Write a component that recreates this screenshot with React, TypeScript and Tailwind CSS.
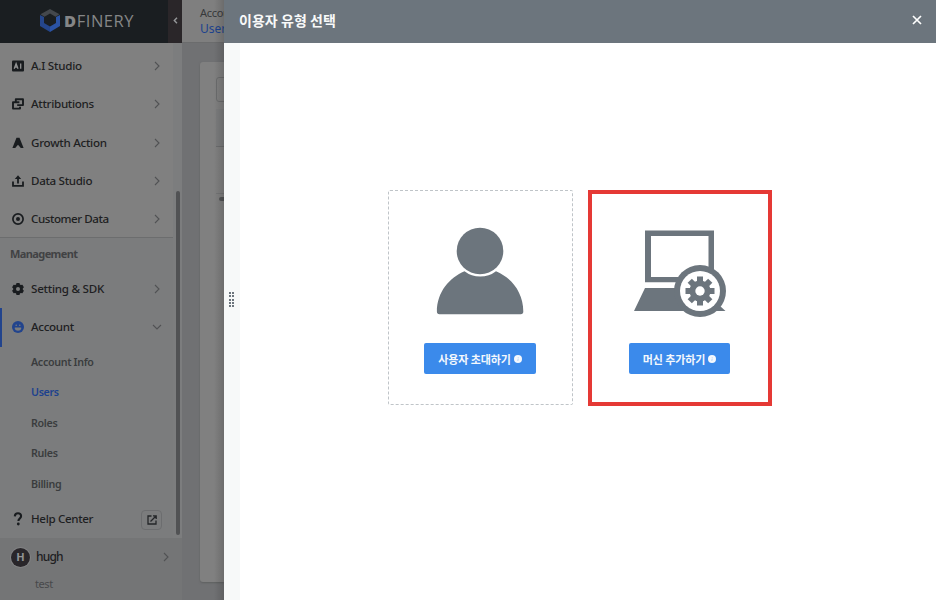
import React from "react";

const latin = "font-['Noto_Sans','Noto_Sans_CJK_KR',sans-serif]";
const korean = "font-['Noto_Sans_CJK_KR','Noto_Sans',sans-serif]";

function Chevron({ down = false }: { down?: boolean }) {
  return (
    <svg width="10" height="10" viewBox="0 0 10 10" fill="none" stroke="#515254" strokeWidth="1.1">
      <path d={down ? "M1 3l4 4 4-4" : "M3 1l4 4-4 4"} />
    </svg>
  );
}

const icons: Record<string, React.ReactNode> = {
  ai: (
    <>
      <rect x="0" y=".5" width="12" height="11" rx="1" fill="#191c1f" />
      <path d="M2.200 8.700l1.900-5L6 8.700M2.800 7h2.600M8.700 3.500v5.300" fill="none" stroke="#909192" strokeWidth="1.3" />
    </>
  ),
  attributions: (
    <g fill="none" stroke="#191c1f" strokeWidth="1.900" strokeLinejoin="round">
      <path d="M3.800 4V1.200h7.200v5.900H5.200" />
      <path d="M7.400 4.200H1v6.400h7V8.800" />
    </g>
  ),
  growth: <path d="M4.500 .8h3L11.600 11H8.800L6 7.800 3.200 11H.4z" fill="#191c1f" />,
  data: (
    <>
      <path d="M1 6.500v4.300h10V6.500" fill="none" stroke="#191c1f" strokeWidth="1.800" />
      <path d="M5.100 8.500V4H2.800L6 .2 9.200 4H6.900v4.500z" fill="#191c1f" />
    </>
  ),
  customer: (
    <>
      <circle cx="6" cy="6" r="5.100" fill="none" stroke="#191c1f" strokeWidth="1.700" />
      <circle cx="6" cy="6" r="2" fill="#191c1f" />
    </>
  ),
  setting: (
    <>
      <path
        d="M4.500 0h3l.4 1.600.9.5 1.600-.4 1.500 2.500L10.800 5.400v1.200l1.100 1.200-1.500 2.500-1.600-.4-.9.5L7.500 12h-3l-.4-1.600-.9-.5-1.600.4L.1 7.800l1.100-1.200V5.400L.1 4.200l1.500-2.500 1.600.4.9-.5z"
        fill="#191c1f"
      />
      <circle cx="6" cy="6" r="2" fill="#7b7c7d" />
    </>
  ),
  account: (
    <>
      <circle cx="6" cy="6" r="6" fill="#22448d" />
      <circle cx="4.200" cy="4.300" r=".8" fill="#7b7c7d" />
      <circle cx="7.800" cy="4.300" r=".8" fill="#7b7c7d" />
      <path d="M2.800 6.600h6.400v.6C9 9 7.500 9.700 6 9.700S3 9 2.800 7.200z" fill="#7b7c7d" />
    </>
  ),
};

function NavRow({ icon, label, spacing, down, active }: { icon: string; label: string; spacing: string; down?: boolean; active?: boolean }) {
  return (
    <div className={`flex h-[38.3px] shrink-0 items-center pr-[11px] ${active ? "border-l-2 border-[#22448d] pl-[10px]" : "pl-3"}`}>
      <svg width="12" height="12" viewBox="0 0 12 12">{icons[icon]}</svg>
      <span className={`ml-[7px] flex-1 text-[11.6px] leading-4 font-medium whitespace-nowrap text-[#1e2022] ${spacing}`}>{label}</span>
      <Chevron down={down} />
    </div>
  );
}

function Logo() {
  return (
    <div className="flex h-[43px] shrink-0 bg-[#1a1e21]">
      <div className="flex w-[168px] items-center pb-[2px] pl-10">
        <svg width="20" height="23" viewBox="0 0 20 23">
          <path d="M0 6l4 2v6l6 3.600V23L0 17z" fill="#25468b" />
          <path d="M20 6l-4 2v6l-6 3.600V23l10-6z" fill="#2b53a4" />
          <path d="M10 0l9.500 5.300-4 2.400L10 4.600 4.500 7.700l-4-2.400z" fill="#44484d" />
        </svg>
        <span className="ml-1 flex font-['Open_Sans',sans-serif] text-[16.5px] leading-5 tracking-[0.55px] text-[#858687]">
          <b className="font-extrabold">D</b><span>FINERY</span>
        </span>
      </div>
      <div className="flex w-[14px] items-center justify-center bg-[#2a2629] pb-[2px]">
        <svg width="5" height="7" viewBox="0 0 5 7" fill="none" stroke="#96989a" strokeWidth="1.400"><path d="M4 .7L1.300 3.500 4 6.300" /></svg>
      </div>
    </div>
  );
}

function Sidebar() {
  return (
    <aside className="flex h-full w-[182px] shrink-0 flex-col bg-[#7b7c7d]">
      <Logo />
      <div className="flex h-[495px] shrink-0">
        <div className="flex w-[173px] flex-col">
          <div className="h-[195px] border-b border-[#6c6d6e] bg-[#808080] pt-[4px]">
            <NavRow icon="ai" label="A.I Studio" spacing="tracking-[-0.25px]" />
            <NavRow icon="attributions" label="Attributions" spacing="tracking-[-0.3px]" />
            <NavRow icon="growth" label="Growth Action" spacing="tracking-[-0.27px]" />
            <NavRow icon="data" label="Data Studio" spacing="tracking-[-0.32px]" />
            <NavRow icon="customer" label="Customer Data" spacing="tracking-[-0.45px]" />
          </div>
          <div className="flex h-8 items-center pl-[10px] text-[11px] leading-4 font-bold tracking-[-0.6px] text-[#414244]">Management</div>
          <NavRow icon="setting" label="Setting & SDK" spacing="tracking-[-0.25px]" />
          <NavRow icon="account" label="Account" spacing="tracking-[-0.3px]" down active />
          <div className="-mt-px flex flex-col pl-[31px] text-[10.700px] font-semibold tracking-[-0.33px] text-[#3a3c3e]">
            <span className="h-[30.6px] leading-[32px]">Account Info</span>
            <span className="h-[30.6px] leading-[32px] text-[#1d428e]">Users</span>
            <span className="h-[30.6px] leading-[32px]">Roles</span>
            <span className="h-[30.6px] leading-[32px]">Rules</span>
            <span className="h-[30.6px] leading-[32px]">Billing</span>
          </div>
          <div className="mt-px flex h-[38px] items-center pr-[11px] pl-3">
            <svg width="12" height="14" viewBox="0 0 12 14"><path d="M2.800 4.400C2.900 2.200 4 1.300 6 1.300s3.100 1 3.100 2.800c0 2.500-2.700 2.400-2.700 5" fill="none" stroke="#191c1f" strokeWidth="2.100" /><circle cx="6.300" cy="12" r="1.400" fill="#191c1f" /></svg>
            <span className="ml-[7px] flex-1 text-[11.6px] leading-4 font-medium tracking-[-0.35px] text-[#1e2022]">Help Center</span>
            <span className="mt-[2px] flex h-5 w-[21px] items-center justify-center rounded-sm border border-[#6c6d6f]">
              <svg width="10" height="10" viewBox="0 0 10 10" fill="none" stroke="#242629" strokeWidth="1.300"><path d="M4.500 1H1v8h8V5.500M6 .8h3.200V4M9 1L3.500 6.500" /></svg>
            </span>
          </div>
        </div>
        <div className="flex flex-1 flex-col bg-[#7c7d7e] pt-[148px] pl-[3px]">
          <div className="h-[344px] w-1 rounded-full bg-[#515254]" />
        </div>
      </div>
      <div className="flex-1 bg-[#747576] pt-2">
        <div className="flex h-[22px] items-center pr-[11px] pl-[11px]">
          <span className="flex size-[19px] items-center justify-center rounded-full bg-[#29262a] text-[11px] font-bold text-[#929394] ring-1 ring-[#828384]">H</span>
          <span className="ml-[6px] flex-1 text-[12px] font-medium tracking-[-0.8px] text-[#1e2022]">hugh</span>
          <Chevron />
        </div>
        <div className="mt-2 pl-[35px] text-[11px] leading-4 tracking-[-0.4px] text-[#48494b]">test</div>
      </div>
    </aside>
  );
}

function PageStrip() {
  return (
    <div className="relative flex h-full w-[42px] shrink-0 flex-col overflow-hidden bg-[#707173]">
      <div className="h-[43px] shrink-0 border-b border-[#6b6c6d] bg-[#7f7f7f] pt-[6px] pl-[18px]">
        <div className="text-[11px] leading-[14px] tracking-[-0.3px] text-[#37393b]">Account</div>
        <div className="text-[12px] leading-[17px] text-[#1d428e]">Users</div>
      </div>
      <div className="mt-[19px] ml-[18px] h-[520px] rounded-l-[3px] bg-[#808080] pt-[15px] pl-4 shadow-[0_1px_2px_#5e5f60]">
        <div className="h-[25px] w-8 rounded-[3px] border border-[#6b6c6d]" />
        <div className="mt-[7px] h-[38px] border-b border-[#6b6c6d] bg-[#7b7c7d]" />
        <div className="h-[47px] border-b border-[#737475]" />
        <div className="mt-[3px] ml-[3px] h-1 rounded-l-full bg-[#535456]" />
      </div>
      <div className="absolute inset-y-0 right-0 w-[10px] bg-linear-to-r from-transparent to-black/15" />
    </div>
  );
}

function InfoDot() {
  return (
    <svg width="8" height="8" viewBox="0 0 8 8"><circle cx="4" cy="4" r="4" fill="#f4f8fd" /><path d="M4.200 2v.8M4.200 3.600L3.800 6" stroke="#a9caf1" strokeWidth=".8" /></svg>
  );
}

function ActionButton({ label, width }: { label: string; width: string }) {
  return (
    <button className={`flex h-[31px] items-center justify-center gap-[3px] rounded-[2px] bg-[#3b8aeb] text-[11px] leading-4 font-bold tracking-[-0.1px] whitespace-nowrap text-[#f4f8fd] ${korean} ${width}`}>
      {label}
      <InfoDot />
    </button>
  );
}

function PersonIcon() {
  return (
    <svg width="88" height="88" viewBox="0 0 88 88" fill="#6c757d">
      <circle cx="44" cy="24" r="23.300" />
      <path d="M28.500 44.200a25.600 25.600 0 0 0 31.500 0C75 50.500 87.300 65 87.300 84.500q0 2.800-2.600 2.800H3.500Q.9 87.300 .9 84.500C.9 65 13.500 50.500 28.500 44.200z" />
    </svg>
  );
}

function MachineIcon() {
  const teeth = [0, 45, 90, 135, 180, 225, 270, 315];
  return (
    <svg width="92" height="88" viewBox="0 0 92 88">
      <path d="M11 .5h69v51.800H11zM17 6v41h57.500V6z" fill="#6c757d" fillRule="evenodd" />
      <path d="M11 58h30v-4h7v4h30l9 16-1 2 5.500 5H0z" fill="#6c757d" />
      <path d="M80 40h12v32H80z" fill="white" />
      <circle cx="66" cy="61" r="26" fill="#6c757d" />
      <circle cx="66" cy="61" r="20" fill="white" />
      <g fill="#6c757d">
        {teeth.map((angle) => <rect key={angle} x="63" y="46.500" width="6" height="8" transform={`rotate(${angle} 66 61)`} />)}
        <circle cx="66" cy="61" r="10.500" />
      </g>
      <circle cx="66" cy="61" r="4.700" fill="white" />
    </svg>
  );
}

function Drawer() {
  return (
    <section className="flex h-full flex-1 flex-col bg-white">
      <header className="flex h-[43px] shrink-0 items-center bg-[#6c757d] pr-[14px] pl-[15px]">
        <h1 className={`flex-1 pb-[3px] text-[14px] leading-5 font-bold tracking-[0.05px] text-[#f8f9f9] ${korean}`}>이용자 유형 선택</h1>
        <svg className="mb-[3px]" width="10" height="10" viewBox="0 0 10 10" stroke="white" strokeWidth="1.700"><path d="M1 1l8 8M9 1L1 9" /></svg>
      </header>
      <div className="flex flex-1">
        <div className="flex w-4 shrink-0 items-center justify-center bg-[#f7f9f9] pr-px pb-11">
          <div className="grid grid-cols-2 gap-x-px gap-y-[1.400px]">
            {Array.from({ length: 10 }, (_, i) => <i key={i} className="size-[2px] bg-[#6c757d]" />)}
          </div>
        </div>
        <div className="flex flex-1 items-start gap-[15px] pt-[147px] pl-[148px]">
          <div className="flex h-[215px] w-[185px] flex-col items-center rounded-[2px] border border-dashed border-[#bfc4c8] pt-9 pr-px">
            <PersonIcon />
            <div className="h-[28px]" />
            <ActionButton label="사용자 초대하기" width="w-[112px]" />
          </div>
          <div className="flex h-[216px] w-[184px] flex-col items-center border-4 border-[#e53935] pt-9">
            <MachineIcon />
            <div className="h-[25px]" />
            <div className="pr-px">
              <ActionButton label="머신 추가하기" width="w-[101px]" />
            </div>
          </div>
        </div>
      </div>
    </section>
  );
}

export default function App() {
  return (
    <div className={`flex h-[600px] w-[936px] overflow-hidden ${latin}`}>
      <Sidebar />
      <PageStrip />
      <Drawer />
    </div>
  );
}
